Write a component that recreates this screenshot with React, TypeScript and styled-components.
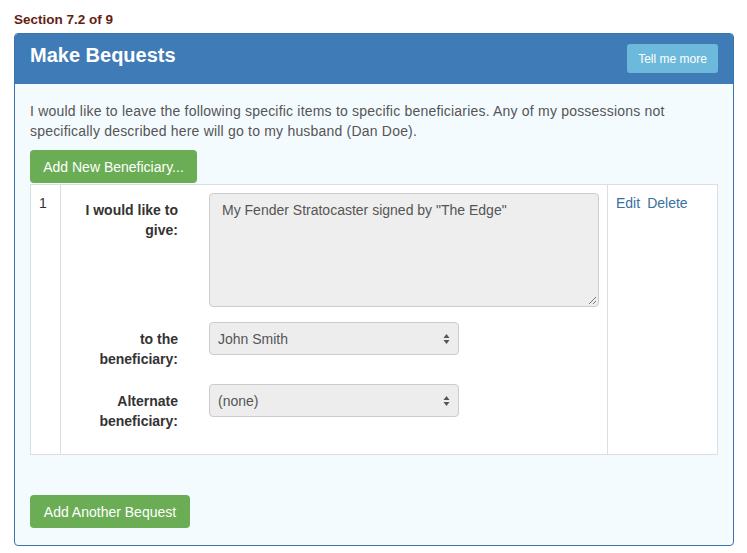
import React from "react";
import styled, { createGlobalStyle } from "styled-components";

const Global = createGlobalStyle`
  html, body { margin: 0; padding: 0; background: #ffffff; }
  body { font-family: "Liberation Sans", Arial, Helvetica, sans-serif; color: #333; }
  * { box-sizing: border-box; }
`;

const Page = styled.div`
  padding: 11px 13px 0 14px;
  width: 747px;
`;

const SectionLabel = styled.div`
  font-size: 13.5px;
  line-height: 18px;
  font-weight: bold;
  color: #661c12;
  margin-bottom: 4px;
`;

const Panel = styled.div`
  width: 720px;
  border: 1px solid #3a74ac;
  border-radius: 4px;
  background: #f4fbff;
  overflow: hidden;
`;

const Heading = styled.div`
  display: flex;
  justify-content: space-between;
  align-items: flex-start;
  background: #3f7bb6;
  height: 50px;
  padding: 9px 15px 0 15px;
`;

const Title = styled.h2`
  margin: 0;
  color: #ffffff;
  font-size: 20px;
  line-height: 24px;
  font-weight: bold;
`;

const InfoButton = styled.button`
  background: #6db9dc;
  border: none;
  border-radius: 3px;
  color: #fff;
  font-family: inherit;
  font-size: 12px;
  height: 29px;
  width: 91px;
  margin-top: 1px;
  padding: 0;
`;

const Body = styled.div`
  padding: 17px 15px 17px 15px;
`;

const Intro = styled.p`
  margin: 0 0 9px 0;
  font-size: 14px;
  line-height: 20px;
  letter-spacing: 0.2px;
  color: #555;
`;

const GreenButton = styled.button<{ $w: number }>`
  background: #6aad55;
  border: none;
  border-radius: 4px;
  color: #fff;
  font-family: inherit;
  font-size: 14px;
  height: 33px;
  width: ${(p) => p.$w}px;
  padding: 0;
  display: block;
`;

const Table = styled.div`
  margin-top: 1px;
  display: grid;
  grid-template-columns: 29px 1fr 110px;
  border: 1px solid #dcdfe2;
  background: #ffffff;
`;

const Cell = styled.div<{ $divider?: boolean }>`
  padding: 8px;
  font-size: 14px;
  line-height: 20px;
  color: #333;
  border-left: ${(p) => (p.$divider ? "1px solid #dcdfe2" : "none")};
`;

const Form = styled.div`
  display: grid;
  grid-template-columns: 109px 1fr;
  column-gap: 31px;
  row-gap: 15px;
  padding-bottom: 15px;
`;

const Label = styled.div`
  text-align: right;
  font-weight: bold;
  font-size: 14px;
  line-height: 20px;
  padding-top: 7px;
  color: #333;
`;

const Control = styled.div`
  position: relative;
`;

const TextArea = styled.div`
  height: 114px;
  background: #eeeeee;
  border: 1px solid #cccccc;
  border-radius: 4px;
  padding: 6px 12px;
  font-size: 14px;
  line-height: 20px;
  color: #555;
  position: relative;
`;

const Grip = styled.svg`
  position: absolute;
  right: 1px;
  bottom: 1px;
`;

const Select = styled.div`
  width: 250px;
  height: 33px;
  background: #ededed;
  border: 1px solid #cccccc;
  border-radius: 4px;
  padding: 0 8px;
  display: flex;
  align-items: center;
  justify-content: space-between;
  font-size: 14px;
  color: #555;
`;

const Links = styled.div`
  display: flex;
  gap: 7px;
`;

const Link = styled.a`
  color: #3a6f9e;
  text-decoration: none;
  font-size: 14px;
`;

const Spacer = styled.div`
  height: 40px;
`;

const Arrows = () => (
  <svg width="7" height="12" viewBox="0 0 7 12">
    <path d="M3.5 1 L6.5 5 L0.5 5 Z" fill="#555" />
    <path d="M3.5 11 L6.5 7 L0.5 7 Z" fill="#555" />
  </svg>
);

export default function App() {
  return (
    <>
      <Global />
      <Page>
        <SectionLabel>Section 7.2 of 9</SectionLabel>
        <Panel>
          <Heading>
            <Title>Make Bequests</Title>
            <InfoButton>Tell me more</InfoButton>
          </Heading>
          <Body>
            <Intro>
              I would like to leave the following specific items to specific beneficiaries. Any of my possessions not
              <br />
              specifically described here will go to my husband (Dan Doe).
            </Intro>
            <GreenButton $w={167}>Add New Beneficiary...</GreenButton>
            <Table>
              <Cell>1</Cell>
              <Cell $divider>
                <Form>
                  <Label>
                    I would like to
                    <br />
                    give:
                  </Label>
                  <Control>
                    <TextArea>
                      My Fender Stratocaster signed by "The Edge"
                      <Grip width="9" height="9" viewBox="0 0 9 9">
                        <path d="M8 1 L1 8 M8 5 L5 8" stroke="#777" strokeWidth="1" />
                      </Grip>
                    </TextArea>
                  </Control>
                  <Label>
                    to the
                    <br />
                    beneficiary:
                  </Label>
                  <Control>
                    <Select>
                      <span>John Smith</span>
                      <Arrows />
                    </Select>
                  </Control>
                  <Label>
                    Alternate
                    <br />
                    beneficiary:
                  </Label>
                  <Control>
                    <Select>
                      <span>(none)</span>
                      <Arrows />
                    </Select>
                  </Control>
                </Form>
              </Cell>
              <Cell $divider>
                <Links>
                  <Link href="#">Edit</Link>
                  <Link href="#">Delete</Link>
                </Links>
              </Cell>
            </Table>
            <Spacer />
            <GreenButton $w={160}>Add Another Bequest</GreenButton>
          </Body>
        </Panel>
      </Page>
    </>
  );
}
